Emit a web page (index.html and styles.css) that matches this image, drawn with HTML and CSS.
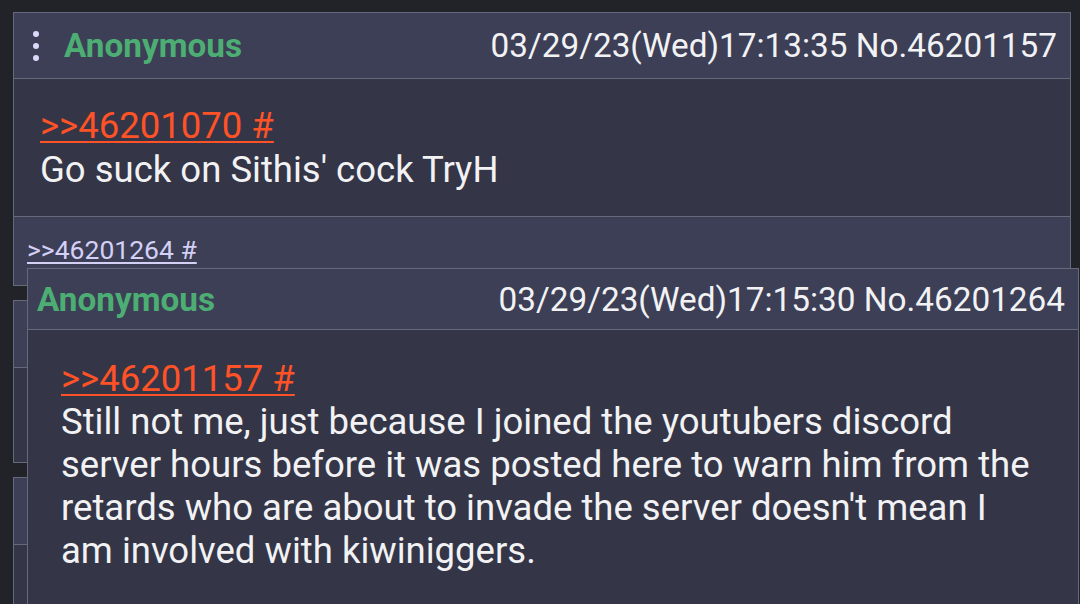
FILE: index.html
```html
<!DOCTYPE html>
<html lang="en">
<head>
    <meta charset="UTF-8">
    <meta name="viewport" content="width=device-width, initial-scale=1.0">
    <title>Thread</title>
    <link rel="stylesheet" href="styles.css">
</head>
<body>
    <main class="thread">
        <!-- Post yang dibuka -->
        <article class="post">
            <div class="post-head">
                <div class="who">
                    <span class="menu-dots"><i></i><i></i><i></i></span>
                    <span class="name">Anonymous</span>
                </div>
                <span class="meta">03/29/23(Wed)17:13:35 No.46201157</span>
            </div>
            <div class="post-body">
                <a class="quote" href="#">&gt;&gt;46201070 #</a><br>
                Go suck on Sithis' cock TryH
            </div>
            <div class="replies">
                <a class="backlink" href="#">&gt;&gt;46201264 #</a>
            </div>
        </article>

        <!-- Post lain di belakang popup -->
        <article class="post">
            <div class="post-head tall"></div>
            <div class="post-body short"></div>
        </article>
        <article class="post">
            <div class="post-head tall"></div>
            <div class="post-body short"></div>
        </article>

        <!-- Popup preview -->
        <article class="post preview">
            <div class="post-head">
                <span class="name">Anonymous</span>
                <span class="meta">03/29/23(Wed)17:15:30 No.46201264</span>
            </div>
            <div class="post-body">
                <a class="quote" href="#">&gt;&gt;46201157 #</a><br>
                Still not me, just because I joined the youtubers discord server hours before it was posted here to warn him from the retards who are about to invade the server doesn't mean I am involved with kiwiniggers.
            </div>
        </article>
    </main>
</body>
</html>
```

FILE: styles.css
```css
* {
    margin: 0;
    padding: 0;
    box-sizing: border-box;
    font-family: 'Roboto', 'Liberation Sans', sans-serif;
}

body {
    background-color: #212329;
    color: #f2f2f4;
    width: 1080px;
    height: 604px;
    overflow: hidden;
}

.thread {
    position: relative;
    display: flex;
    flex-direction: column;
    gap: 14px;
    height: 604px;
    overflow: hidden;
    padding: 12px 9px 0 13px;
}

.post {
    flex-shrink: 0;
    border: 1px solid #646a7a;
    background-color: #343647;
}

.post-head {
    display: flex;
    justify-content: space-between;
    align-items: center;
    height: 66px;
    padding: 0 13px 0 14px;
    background-color: #3c3f56;
    border-bottom: 1px solid #646a7a;
    font-size: 33.3px;
}

.post-head.tall {
    height: 67px;
}

.who {
    display: flex;
    align-items: center;
    gap: 25px;
}

.menu-dots {
    display: flex;
    flex-direction: column;
    gap: 6px;
    margin-left: 5px;
}

.menu-dots i {
    display: block;
    width: 6px;
    height: 6px;
    border-radius: 50%;
    background-color: #dcd8f8;
}

.name {
    color: #4dae74;
    font-weight: bold;
}

.meta {
    color: #f2f2f4;
}

.post-body {
    padding: 25px 26px 24px;
    font-size: 36.5px;
    line-height: 44px;
}

.post-body.short {
    height: 94px;
}

.quote {
    color: #ff5226;
    text-decoration: underline;
    text-decoration-thickness: 2px;
    text-underline-offset: 3px;
}

.replies {
    height: 69px;
    padding: 17px 13px 0;
    background-color: #3c3f56;
    border-top: 1px solid #646a7a;
    font-size: 26.5px;
}

.backlink {
    color: #d4d0f6;
    text-decoration: underline;
    text-decoration-thickness: 2px;
    text-underline-offset: 3px;
}

/* popup di atas thread */
.preview {
    position: absolute;
    left: 27px;
    top: 268px;
    width: 1052px;
    height: 400px;
}

.preview .post-head {
    height: 61px;
    padding: 0 13px 0 9px;
}

.preview .post-body {
    padding: 27px 35px 0 33px;
    line-height: 43px;
}
```
